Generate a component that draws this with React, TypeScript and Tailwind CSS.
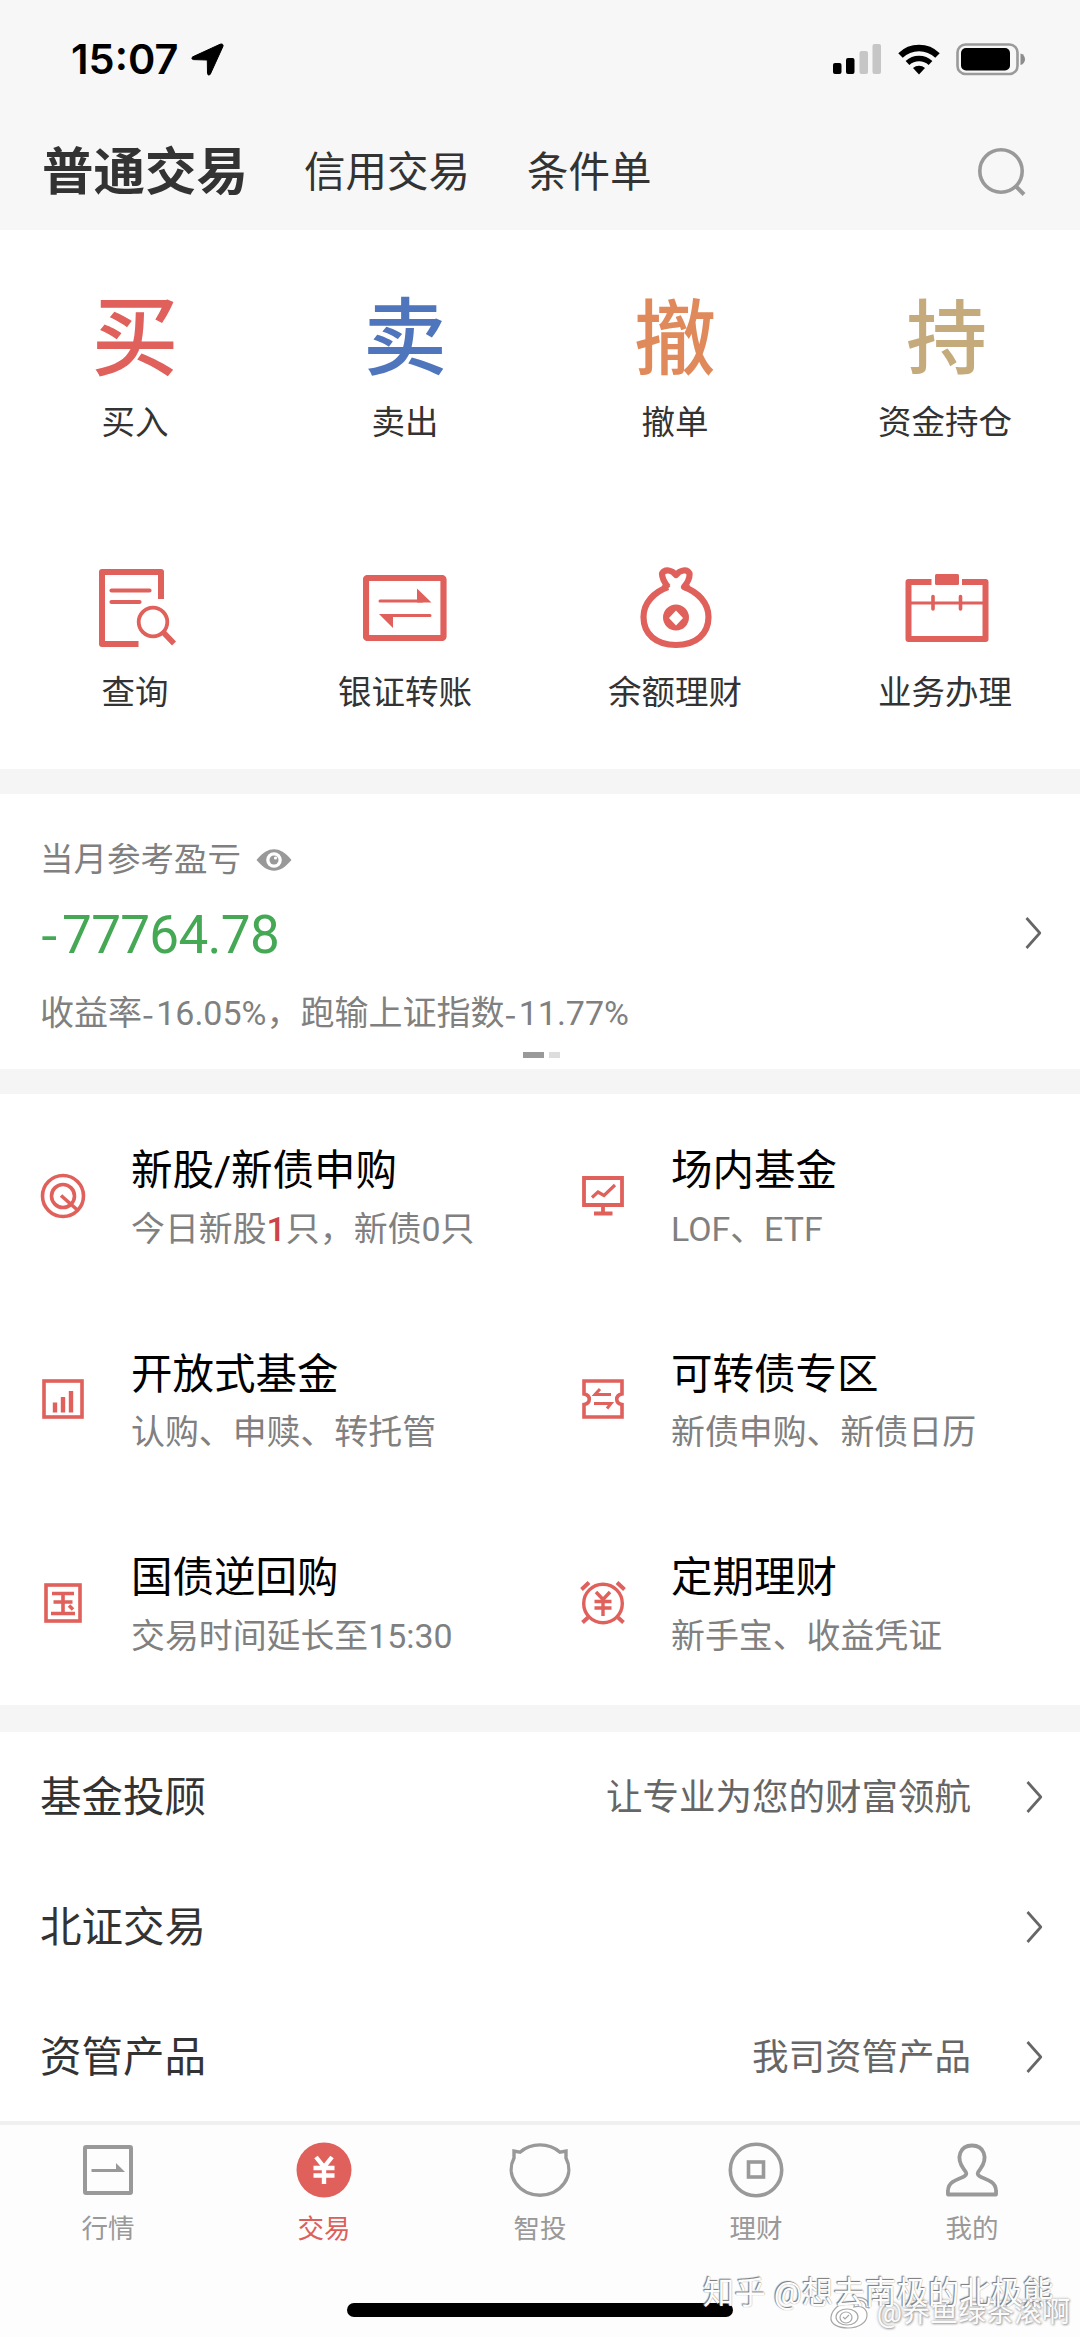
import React from 'react';

const RED = '#e0605b';

interface IconProps {
  className?: string;
}

const SearchIcon: React.FC = () => (
  <svg width="48" height="50" viewBox="0 0 48 50" fill="none" stroke="#999" strokeWidth="3.6">
    <circle cx="23" cy="24" r="21.2" />
    <path d="M38 39.5L46 47.5" strokeWidth="4" />
  </svg>
);

const LocationIcon: React.FC = () => (
  <svg width="33" height="33" viewBox="0 0 33 33" fill="#000">
    <path d="M31.3 1.2c.9.5 1 1.300.6 2.300L19.400 31c-.8 1.700-2.800 1.200-2.900-.6L16.300 17 2.500 16.600c-1.800-.1-2.200-2-.7-2.800L29 1.300c.9-.4 1.700-.4 2.300-.1z" stroke="#000" strokeWidth="1" />
  </svg>
);

const SignalIcon: React.FC = () => (
  <svg width="49" height="31" viewBox="0 0 49 31">
    <rect x="0" y="19" width="8.500" height="11" rx="2" fill="#000" />
    <rect x="13" y="14" width="8.500" height="16" rx="2" fill="#000" />
    <rect x="26.500" y="7" width="8.500" height="23" rx="2" fill="#c6c6c6" />
    <rect x="39.500" y="0" width="8.500" height="30" rx="2" fill="#c6c6c6" />
  </svg>
);

const WifiIcon: React.FC = () => (
  <svg width="42" height="31" viewBox="0 0 42 31" fill="none" stroke="#000" strokeWidth="6.400">
    <path d="M2.500 11.500a26.500 26.500 0 0 1 37 0" />
    <path d="M9.500 19a17 17 0 0 1 23 0" strokeWidth="5.500" />
    <path d="M21 30.500l-6-6.500a9 9 0 0 1 12 0z" fill="#000" stroke="none" />
  </svg>
);

const BatteryIcon: React.FC = () => (
  <svg width="70" height="33" viewBox="0 0 70 33">
    <rect x="1.500" y="1.500" width="60" height="29.500" rx="8" fill="none" stroke="#9a9a9a" strokeWidth="2.600" />
    <rect x="5" y="5" width="49" height="22.500" rx="5" fill="#000" />
    <path d="M64.500 10.500c6 1.500 6 10 0 11.500z" fill="#8c8c8c" />
  </svg>
);

const QueryIcon: React.FC = () => (
  <svg className="ml-[5px]" width="80" height="78" viewBox="0 0 80 78" fill="none" stroke={RED} strokeWidth="6">
    <path d="M40.500 75H4V3h59v27" strokeLinejoin="round" />
    <path d="M13.500 21.500h38M13.500 33h28" strokeWidth="4.200" strokeLinecap="round" />
    <circle cx="55" cy="53" r="14.300" strokeWidth="3.800" />
    <path d="M65 63L76 74.500" strokeWidth="5.500" />
  </svg>
);

const TransferIcon: React.FC = () => (
  <svg width="84" height="66" viewBox="0 0 84 66" fill="none" stroke={RED}>
    <rect x="3" y="3" width="77.500" height="60" rx="1.500" strokeWidth="6.200" />
    <path d="M17 26h42M25 40.500h42" strokeWidth="3" strokeLinecap="round" />
    <path d="M54 13.500L68.500 27.500H54zM16 39h14v14z" fill={RED} stroke="none" />
  </svg>
);

const MoneyBagIcon: React.FC = () => (
  <svg className="ml-[2px]" width="72" height="82" viewBox="0 0 72 82" fill="none" stroke={RED} strokeWidth="6.200" strokeLinejoin="round">
    <path d="M28 20C14 25 3.500 36 3.500 50C3.500 67 16 78 36 78S68.500 67 68.500 50C68.500 36 58 25 44 20C48 15 50 11 49.500 6.500C47 1.500 40 3 36 8C32 3 25 1.500 22 6.500C22 11 24 15 28 20" />
    <path d="M28 21.500L24 17M44 21.500L48 17" />
    <path d="M36 37.500a13 13 0 1 0 0 26a13 13 0 1 0 0-26zM36 43.500l7 7.500-7 7.500-7-7.500z" fill={RED} fillRule="evenodd" stroke="none" />
  </svg>
);

const BriefcaseIcon: React.FC = () => (
  <svg className="ml-[3px]" width="84" height="68" viewBox="0 0 84 68" fill="none" stroke={RED}>
    <path d="M26.500 8H3.500v57h77V8H57" strokeWidth="6" strokeLinejoin="round" />
    <rect x="30" y="0" width="24" height="11" rx="1.500" fill={RED} stroke="none" />
    <path d="M4 29h76" strokeWidth="3" />
    <path d="M28 22.500v12.500M55.500 22.500v12.500" strokeWidth="3.600" strokeLinecap="round" />
  </svg>
);

const EyeIcon: React.FC = () => (
  <svg width="36" height="22" viewBox="0 0 36 22">
    <path d="M.5 11C7 3.500 12 .3 18 .3S29 3.500 35.500 11C29 18.500 24 21.700 18 21.700S7 18.500.5 11z" fill="#999" />
    <circle cx="18" cy="11" r="7.800" fill="#fff" />
    <circle cx="18" cy="11" r="4.500" fill="#999" />
    <circle cx="19.500" cy="9" r="1.600" fill="#fff" />
  </svg>
);

const ChevronIcon: React.FC<IconProps> = ({ className }) => (
  <svg className={className} width="17" height="32" viewBox="0 0 17 32" fill="none" stroke="#666" strokeWidth="2.700">
    <path d="M1.500 1L14.800 16L1.500 31" strokeLinejoin="round" />
  </svg>
);

const TargetIcon: React.FC = () => (
  <svg width="46" height="46" viewBox="0 0 46 46" fill="none" stroke={RED} strokeWidth="3.600">
    <circle cx="23" cy="23" r="20.500" />
    <circle cx="23" cy="23" r="11.500" />
    <path d="M21 22.500L38 37.500" />
  </svg>
);

const ChartBoxIcon: React.FC = () => (
  <svg width="42" height="40" viewBox="0 0 42 40" fill="none" stroke={RED} strokeWidth="3.600">
    <rect x="2" y="2" width="38" height="36" />
    <path d="M13 23.500v10M21 18v15.500M29 12v21.500" strokeWidth="4.400" />
  </svg>
);

const BondIcon: React.FC = () => (
  <svg width="38" height="40" viewBox="0 0 38 40" fill="none" stroke={RED} strokeWidth="3.600">
    <rect x="2" y="2" width="34" height="36" />
    <path d="M8 10.500h22M9.500 19h19M7 30.500h24M19 10.500v20" />
    <path d="M25 22.500l4 4" />
  </svg>
);

const MonitorIcon: React.FC = () => (
  <svg width="42" height="40" viewBox="0 0 42 40" fill="none" stroke={RED} strokeWidth="3.800">
    <path d="M2 2h38v27H2z" />
    <path d="M21 29v8M12 37.500h18.500" />
    <path d="M10 21.500l6-5.500 6 3.500L33 9" strokeWidth="3.200" />
  </svg>
);

const TicketIcon: React.FC = () => (
  <svg width="42" height="40" viewBox="0 0 42 40" fill="none" stroke={RED} strokeWidth="3.600">
    <path d="M2 2h38v13c-7 1-7 9.500 0 10.500V38H2V25.500C9 24.500 9 16 2 15z" />
    <path d="M29 15.500H13l5-5.500M12 24.500h17l-4 5" strokeWidth="3" />
  </svg>
);

const ClockYenIcon: React.FC = () => (
  <svg width="46" height="44" viewBox="0 0 46 44" fill="none" stroke={RED} strokeWidth="3.400">
    <circle cx="23" cy="22.500" r="19.300" />
    <path d="M1.500 8.500l7.500-7M37 1.500l7.500 7M8 36.500l-5.500 5M38 36.500l5.500 5" strokeWidth="4" />
    <path d="M16 11l7 7.500 7-7.500M23 18v17M14.500 20.500h17M14.500 27h17" />
  </svg>
);

const QuoteTabIcon: React.FC = () => (
  <svg width="50" height="50" viewBox="0 0 50 50" fill="none" stroke="#999" strokeWidth="4">
    <rect x="2" y="2" width="46" height="46" rx="1" />
    <path d="M8.500 25.500h26" strokeWidth="3" />
    <path d="M33 18l9 9h-9z" fill="#999" stroke="none" />
  </svg>
);

const TradeTabIcon: React.FC = () => (
  <svg width="56" height="56" viewBox="0 0 56 56" fill="none" stroke="#fff" strokeWidth="4.400">
    <circle cx="28" cy="28" r="27.500" fill={RED} stroke="none" />
    <path d="M20 15l8 10 8-10M28 24v18M17.500 26h21M17.500 33.500h21" />
  </svg>
);

const BearTabIcon: React.FC = () => (
  <svg width="62" height="56" viewBox="0 0 62 56" fill="none" stroke="#999" strokeWidth="3.400" strokeLinejoin="miter">
    <path d="M5 16V9l6 1.200A28.500 25.500 0 0 1 51 10.200L57 9V16A28.800 26 0 1 1 5 16z" />
  </svg>
);

const CoinTabIcon: React.FC = () => (
  <svg width="56" height="56" viewBox="0 0 56 56" fill="none" stroke="#999" strokeWidth="3.600">
    <circle cx="28" cy="28" r="25.700" />
    <rect x="20.500" y="20" width="15" height="15" />
  </svg>
);

const UserTabIcon: React.FC = () => (
  <svg width="54" height="54" viewBox="0 0 54 54" fill="none" stroke="#999" strokeWidth="3.800" strokeLinejoin="round">
    <path d="M3 51.500C2 41 6.500 38.500 18 34C23 31.500 21.500 29.500 19 26.500C10 14 15.500 2.500 27 2.500S44 14 35 26.500C32.500 29.500 31 31.500 36 34C47.500 38.500 52 41 51 51.500z" />
  </svg>
);

const WeiboIcon: React.FC = () => (
  <svg width="42" height="34" viewBox="0 0 42 34" fill="#ffffffb0" stroke="#a8a8a8" strokeWidth="1.200">
    <path d="M2 21C3 13 12 6 20 6C24 6 26 8 25 11C33 9 38 13 38 19C38 27 29 32 19 32S1 28 2 21z" />
    <path d="M28 1.500C36 1 41 6 40 12l-3-1c0-4-3-7-8-6.500z" />
    <ellipse cx="18" cy="21" rx="11" ry="8" />
    <ellipse cx="17" cy="21.500" rx="6" ry="5.500" />
    <path d="M14 21l2 2 4-4" fill="none" />
  </svg>
);

// wide minus sign used in front of the figures
const Minus: React.FC = () => <span className="font-['Noto_Sans_CJK_SC'] tracking-[0.07em]">-</span>;

const orders = [
  { glyph: '买', label: '买入', style: 'text-[87px] text-[#e0605b]' },
  { glyph: '卖', label: '卖出', style: 'text-[84px] text-[#4f76bc]' },
  { glyph: '撤', label: '撤单', style: 'text-[82px] text-[#e08a5c]' },
  { glyph: '持', label: '资金持仓', style: 'text-[81px] text-[#c5ab7c] pl-[3px]' },
];

const services = [
  { icon: <QueryIcon />, label: '查询' },
  { icon: <TransferIcon />, label: '银证转账' },
  { icon: <MoneyBagIcon />, label: '余额理财' },
  { icon: <BriefcaseIcon />, label: '业务办理' },
];

const products = [
  {
    icon: <TargetIcon />,
    title: '新股/新债申购',
    desc: <>今日新股<span className="font-medium text-[#cf4245]">1</span>只，新债0只</>,
  },
  { icon: <MonitorIcon />, title: '场内基金', desc: 'LOF、ETF' },
  { icon: <ChartBoxIcon />, title: '开放式基金', desc: '认购、申赎、转托管' },
  { icon: <TicketIcon />, title: '可转债专区', desc: '新债申购、新债日历' },
  { icon: <BondIcon />, title: '国债逆回购', desc: '交易时间延长至15:30' },
  { icon: <ClockYenIcon />, title: '定期理财', desc: '新手宝、收益凭证' },
];

const links = [
  { title: '基金投顾', desc: '让专业为您的财富领航' },
  { title: '北证交易', desc: '' },
  { title: '资管产品', desc: '我司资管产品' },
];

const tabs = [
  { icon: <QuoteTabIcon />, label: '行情', active: false },
  { icon: <TradeTabIcon />, label: '交易', active: true },
  { icon: <BearTabIcon />, label: '智投', active: false },
  { icon: <CoinTabIcon />, label: '理财', active: false },
  { icon: <UserTabIcon />, label: '我的', active: false },
];

const Header: React.FC = () => (
  <header className="h-[230px] bg-[#f7f7f7]">
    <div className="flex h-[119px] items-center justify-between pl-[71px] pr-[54px]">
      <div className="flex items-center gap-[13px]">
        <span className="font-['Inter'] text-[41.5px] font-semibold leading-none text-black">15:07</span>
        <LocationIcon />
      </div>
      <div className="flex items-center gap-[16px]">
        <SignalIcon />
        <WifiIcon />
        <BatteryIcon />
      </div>
    </div>
    <nav className="flex h-[108px] items-center whitespace-nowrap pl-[42px] pr-[54px] leading-none text-[#333]">
      <span className="text-[51.5px] font-bold">普通交易</span>
      <span className="ml-[56px] text-[41.5px]">信用交易</span>
      <span className="ml-[57px] text-[41.5px]">条件单</span>
      <button className="mb-[2px] ml-auto" aria-label="搜索">
        <SearchIcon />
      </button>
    </nav>
  </header>
);

const QuickActions: React.FC = () => (
  <section className="h-[539px] bg-white pt-[58px] leading-none">
    <div className="grid grid-cols-4">
      {orders.map((item) => (
        <div key={item.label} className="flex h-[270px] flex-col items-center">
          <div className={`flex h-[100px] items-center pt-[3px] font-medium ${item.style}`}>{item.glyph}</div>
          <div className="mt-[18px] text-[33.5px] text-[#333]">{item.label}</div>
        </div>
      ))}
      {services.map((item) => (
        <div key={item.label} className="flex flex-col items-center">
          <div className="flex h-[100px] items-center">{item.icon}</div>
          <div className="mt-[18px] text-[33.5px] text-[#333]">{item.label}</div>
        </div>
      ))}
    </div>
  </section>
);

const ProfitCard: React.FC = () => (
  <section className="flex h-[275px] flex-col bg-white pl-[40px] pr-[38px] pt-[43px] leading-none">
    <div className="flex h-[46px] items-center gap-[15px] text-[33.5px] text-[#808080]">
      当月参考盈亏
      <EyeIcon />
    </div>
    <div className="mt-[19px] flex h-[62px] items-center justify-between">
      <span className="text-[53px] tracking-[-0.7px] text-[#45a854]">
        <Minus />
        77764.78
      </span>
      <ChevronIcon />
    </div>
    <div className="mt-[26px] flex h-[46px] items-center text-[34px] text-[#808080]">
      收益率
      <Minus />
      16.05%，跑输上证指数
      <Minus />
      11.77%
    </div>
    <div className="mt-[16px] flex justify-center gap-[5px]">
      <span className="h-[6px] w-[21px] bg-[#999]" />
      <span className="h-[6px] w-[11px] bg-[#ddd]" />
    </div>
  </section>
);

const ProductGrid: React.FC = () => (
  <section className="grid h-[611px] grid-cols-2 grid-rows-3 bg-white leading-none">
    {products.map((item) => (
      <div key={item.title} className="flex items-center pl-[40px]">
        <div className="flex w-[46px] justify-center">{item.icon}</div>
        <div className="ml-[45px] flex flex-col gap-[21px] whitespace-nowrap pt-[5px]">
          <div className="text-[41.5px] text-black">{item.title}</div>
          <div className="text-[33.9px] text-[#808080]">{item.desc}</div>
        </div>
      </div>
    ))}
  </section>
);

const LinkList: React.FC = () => (
  <section className="h-[389px] bg-white leading-none">
    {links.map((item) => (
      <div key={item.title} className="flex h-[130px] items-center pl-[40px] pr-[37px]">
        <span className="pt-[2px] text-[41.5px] text-[#333]">{item.title}</span>
        <span className="ml-auto pt-[2px] text-[36.5px] text-[#666]">{item.desc}</span>
        <ChevronIcon className="ml-[55px]" />
      </div>
    ))}
  </section>
);

const TabBar: React.FC = () => (
  <footer className="relative h-[216px] border-t-4 border-[#f0f0f0] bg-[#fdfdfd] leading-none">
    <div className="grid grid-cols-5 pt-[17px]">
      {tabs.map((tab) => (
        <div key={tab.label} className={`flex flex-col items-center ${tab.active ? 'text-[#dd5f5b]' : 'text-[#999]'}`}>
          <div className="flex h-[56px] items-center">{tab.icon}</div>
          <div className="mt-[18px] text-[26.5px]">{tab.label}</div>
        </div>
      ))}
    </div>
    <div className="absolute left-[347px] top-[178px] h-[14px] w-[386px] rounded-full bg-black" />
    <div className="absolute right-[10px] top-[171px] flex items-center gap-[6px] whitespace-nowrap text-[28px] text-[#fbfbfb] [text-shadow:0_0_3px_#999,1px_1px_2px_#aaa]">
      <WeiboIcon />
      @养鱼绿茶滚啊
    </div>
    <div className="absolute right-[26px] top-[153px] whitespace-nowrap text-[31.5px] text-[#fdfdfd] [text-shadow:-1px_-1px_1px_#777,0_0_1px_#888]">
      知乎 @想去南极的北极熊
    </div>
  </footer>
);

const App: React.FC = () => {
  return (
    <div className="flex h-[2337px] w-[1080px] flex-col overflow-hidden bg-[#f5f5f5] font-[Roboto,'Noto_Sans_CJK_SC',sans-serif]">
      <Header />
      <QuickActions />
      <div className="h-[25px]" />
      <ProfitCard />
      <div className="h-[25px]" />
      <ProductGrid />
      <div className="h-[27px]" />
      <LinkList />
      <TabBar />
    </div>
  );
};

export default App;
